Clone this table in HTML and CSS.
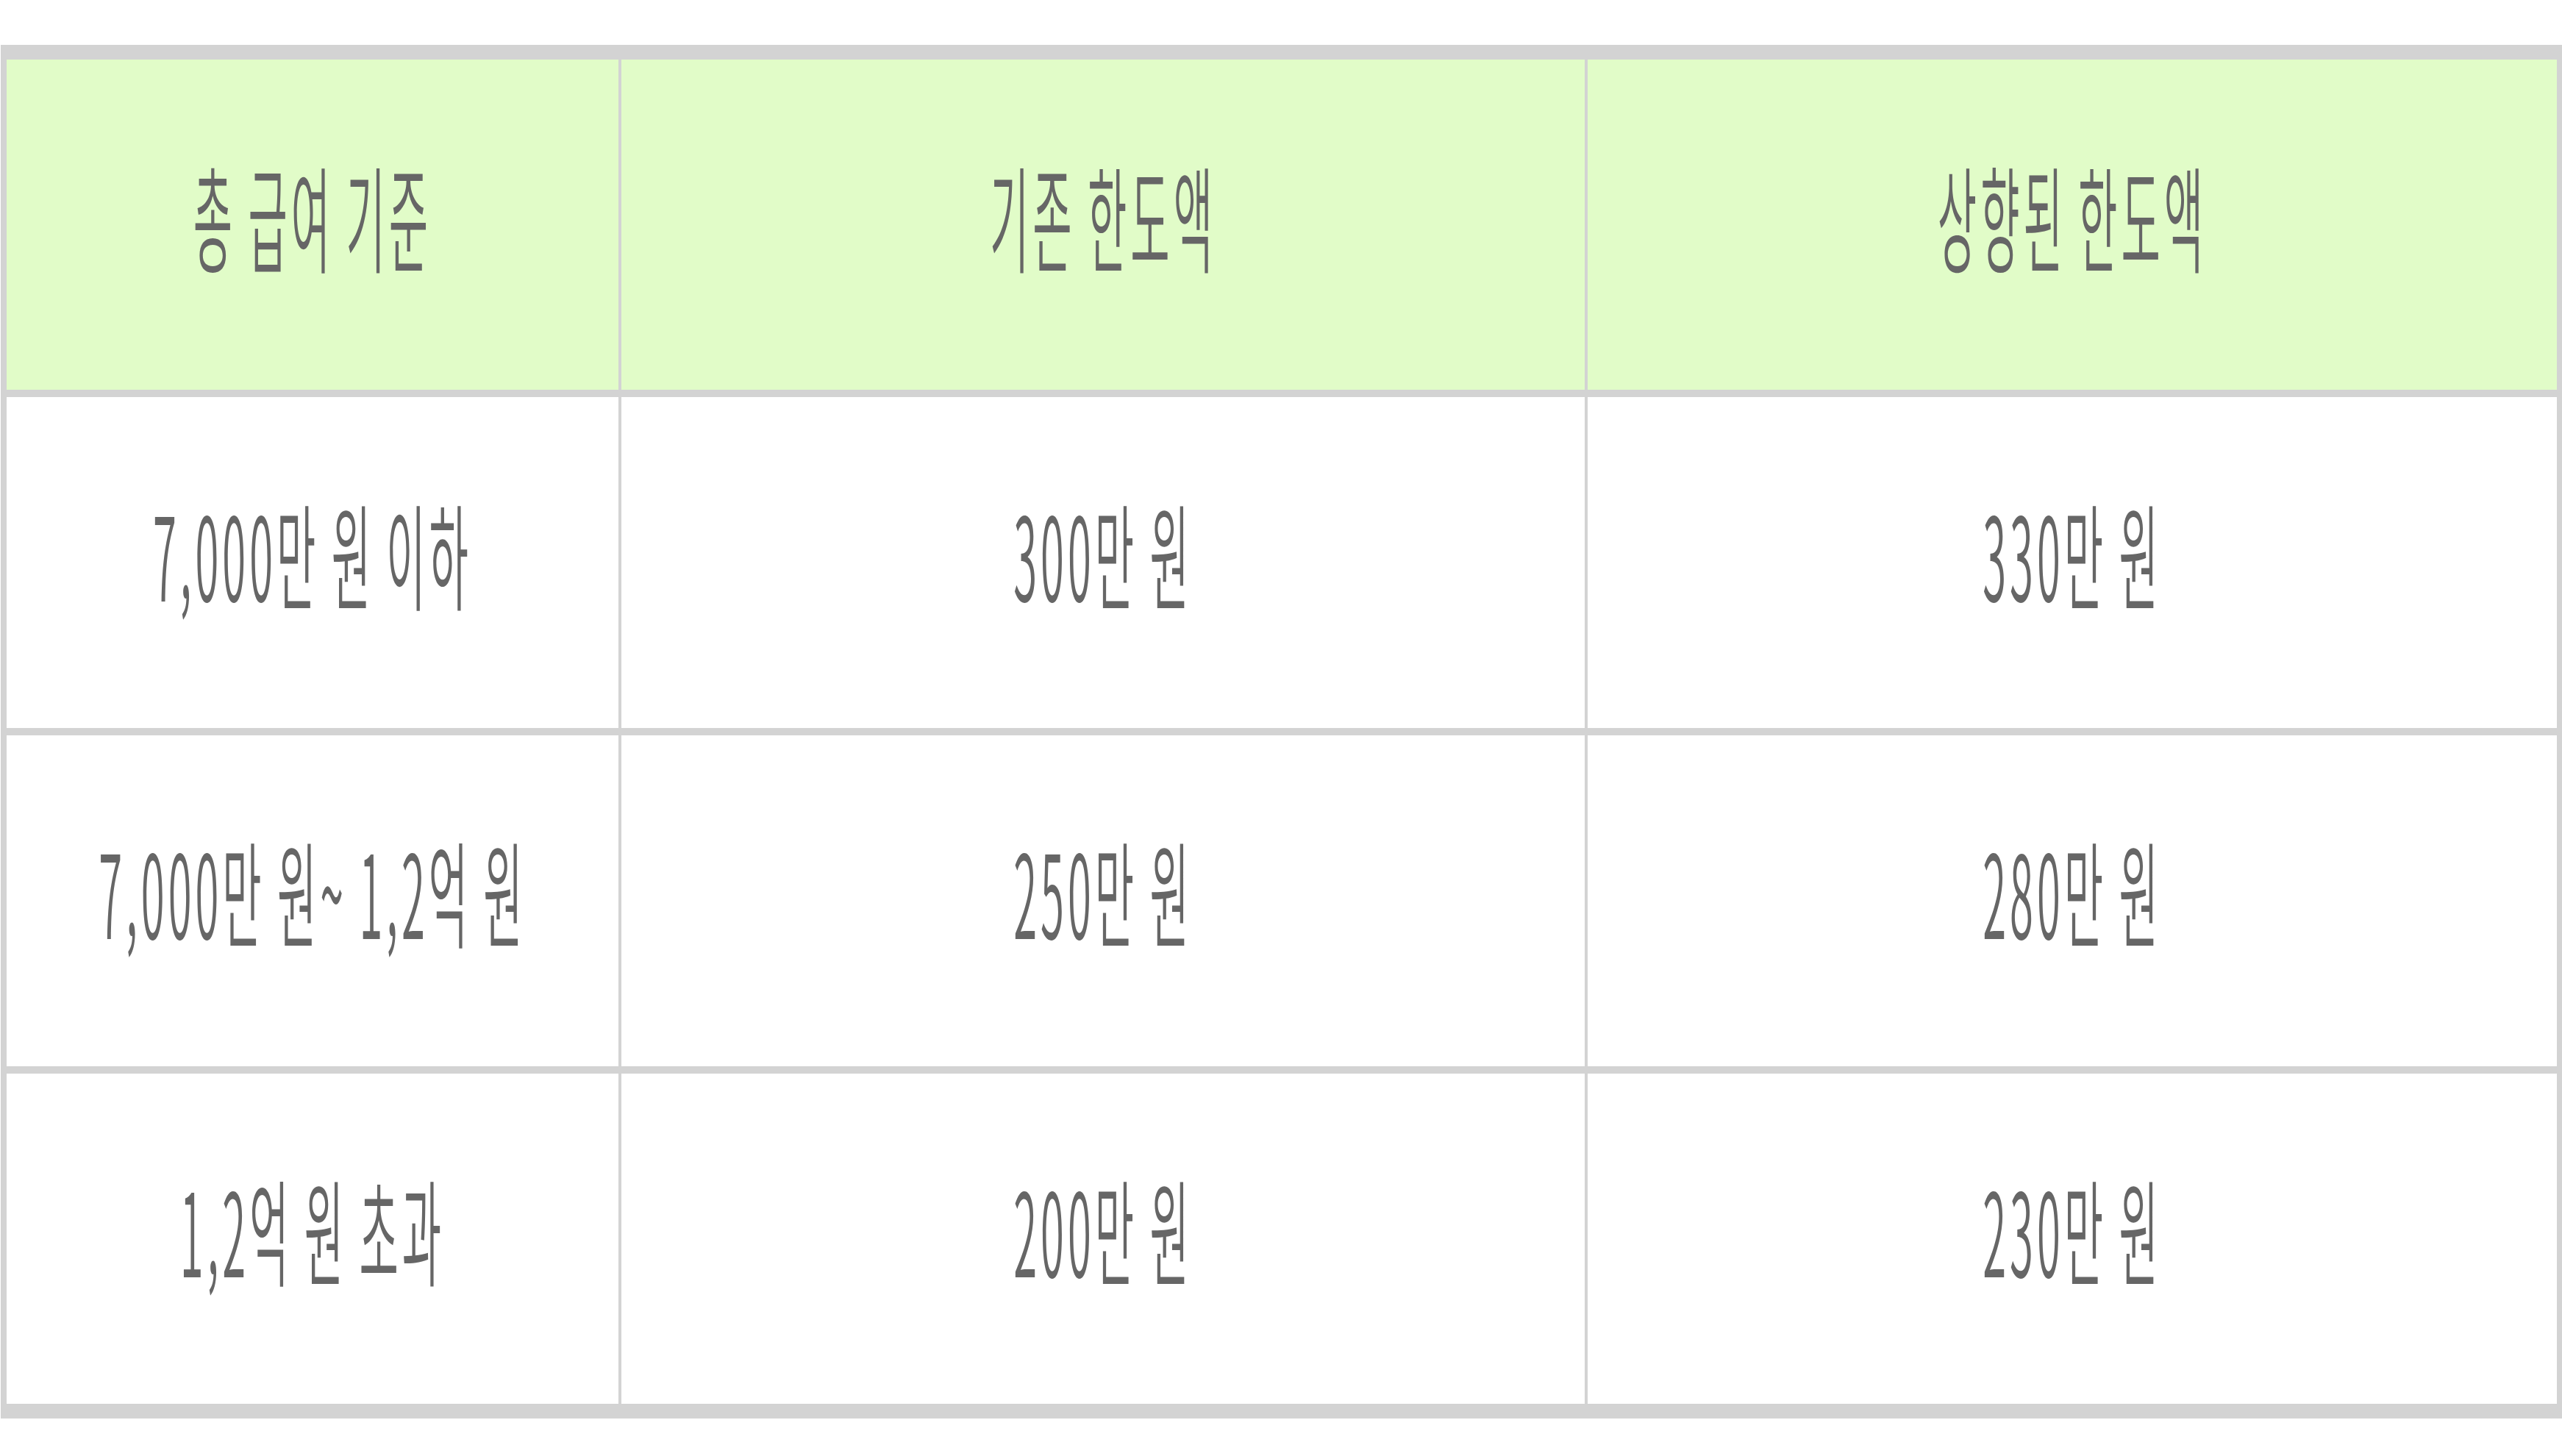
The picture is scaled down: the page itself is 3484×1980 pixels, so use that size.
FILE: index.html
```html
<!DOCTYPE html>
<html lang="ko">
<head>
<meta charset="utf-8">
<title>총 급여 기준 한도액</title>
<link rel="stylesheet" href="styles.css">
</head>
<body>
<div class="table">
  <div class="cell head"><span class="t">총 급여 기준</span></div>
  <div class="cell head"><span class="t">기존 한도액</span></div>
  <div class="cell head"><span class="t">상향된 한도액</span></div>

  <div class="cell"><span class="t">7,000만 원 이하</span></div>
  <div class="cell"><span class="t">300만 원</span></div>
  <div class="cell"><span class="t">330만 원</span></div>

  <div class="cell"><span class="t">7,000만 원~ 1,2억 원</span></div>
  <div class="cell"><span class="t">250만 원</span></div>
  <div class="cell"><span class="t">280만 원</span></div>

  <div class="cell"><span class="t">1,2억 원 초과</span></div>
  <div class="cell"><span class="t">200만 원</span></div>
  <div class="cell"><span class="t">230만 원</span></div>
</div>
</body>
</html>
```
FILE: styles.css
```css
html, body {
  margin: 0;
  padding: 0;
  background: #ffffff;
}

body {
  padding: 61px 0 0 1px;
}

.table {
  display: grid;
  grid-template-columns: 832px 1310px 1318px;
  grid-template-rows: 449px 450px 450px 449px;
  column-gap: 4px;
  row-gap: 10px;
  padding: 20px 7px 20px 8px;
  background: #d3d3d3;
  width: 3469px;
}

.cell {
  background: #ffffff;
  display: flex;
  align-items: center;
  justify-content: center;
}

.cell.head {
  background: #e1fcc8;
}

.t {
  display: inline-block;
  font-family: "Noto Sans CJK KR", "Noto Sans", sans-serif;
  font-size: 58px;
  font-weight: 350;
  line-height: 1;
  letter-spacing: 5px;
  word-spacing: -5px;
  color: #666666;
  white-space: nowrap;
  transform: translateY(-15px) scaleY(2.7);
  transform-origin: center center;
}
```
